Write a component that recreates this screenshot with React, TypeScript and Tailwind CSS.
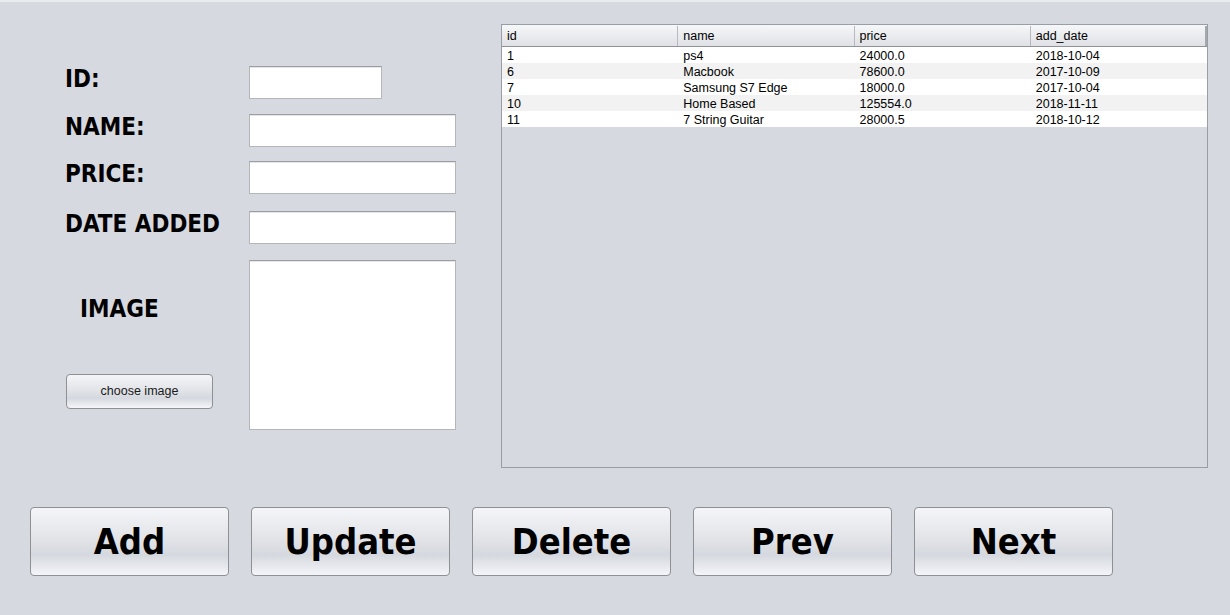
import React from "react";

const rows = [
  { id: "1", name: "ps4", price: "24000.0", date: "2018-10-04" },
  { id: "6", name: "Macbook", price: "78600.0", date: "2017-10-09" },
  { id: "7", name: "Samsung S7 Edge", price: "18000.0", date: "2017-10-04" },
  { id: "10", name: "Home Based", price: "125554.0", date: "2018-11-11" },
  { id: "11", name: "7 String Guitar", price: "28000.5", date: "2018-10-12" },
];

const cols = ["id", "name", "price", "add_date"];

const label =
  "font-['DejaVu_Sans_Condensed','DejaVu_Sans',sans-serif] font-bold text-[24px] leading-[24px] text-black";

const field =
  "bg-white border border-[#b3b6bb] border-t-[#9a9da2] shadow-[inset_0_1px_0_#e4e6e9]";

const FormRow = ({ text, width, className }: { text: string; width: string; className: string }) => (
  <div className={`flex items-center ${className}`}>
    <div className={`w-[184px] mb-[8px] ${label}`}>{text}</div>
    <div className={`${width} h-[33px] ${field}`} />
  </div>
);

const BigButton = ({ text }: { text: string }) => (
  <button className="w-[199px] h-[69px] rounded-[4px] border border-[#8e9094] bg-[linear-gradient(#f4f5f8_0%,#e2e4e8_45%,#d5d8de_70%,#f3f5f9_100%)] flex items-center justify-center font-['DejaVu_Sans_Condensed','DejaVu_Sans',sans-serif] font-bold text-[36px] text-black">
    {text}
  </button>
);

export default function App() {
  return (
    <div className="w-[1230px] h-[615px] bg-[#d6d9df] border-t-2 border-[#e9ebee] overflow-hidden">
      <div className="flex pt-[22px]">
        <div className="w-[501px] pl-[65px] pt-[42px]">
          <FormRow text="ID:" width="w-[133px]" className="" />
          <FormRow text="NAME:" width="w-[207px]" className="mt-[15px]" />
          <FormRow text="PRICE:" width="w-[207px]" className="mt-[14px]" />
          <FormRow text="DATE ADDED" width="w-[207px]" className="mt-[17px]" />
          <div className="flex mt-[16px]">
            <div className="w-[184px]">
              <div className={`pl-[15px] mt-[37px] ${label}`}>IMAGE</div>
              <button className="ml-[1px] mt-[53px] w-[147px] h-[35px] rounded-[4px] border border-[#8e9094] bg-[linear-gradient(#f4f5f8_0%,#e2e4e8_45%,#d5d8de_70%,#f3f5f9_100%)] font-['Liberation_Sans',Arial,sans-serif] text-[12.5px] text-[#1a1a1a]">
                choose image
              </button>
            </div>
            <div className={`w-[207px] h-[170px] ${field}`} />
          </div>
        </div>
        <div className="w-[707px] h-[444px] border border-[#9a9da3] font-['Liberation_Sans',Arial,sans-serif] text-[12.5px] text-black">
          <div className="flex h-[22px] pt-[1px] bg-[linear-gradient(#f6f7f9,#dfe1e5)] border-b border-[#8f9298]">
            {cols.map((c, i) => (
              <div
                key={c}
                className={`w-[176.5px] flex items-center pl-[5px] ${i < 3 ? "border-r border-[#b6b9be]" : "border-r-2 border-[#a4a7ac]"}`}
              >
                {c}
              </div>
            ))}
          </div>
          {rows.map((r, i) => (
            <div key={r.id} className={`flex h-[16px] pt-[2px] items-center ${i % 2 ? "bg-[#f2f2f2]" : "bg-white"}`}>
              <div className="w-[176.5px] pl-[5px]">{r.id}</div>
              <div className="w-[176.5px] pl-[5px]">{r.name}</div>
              <div className="w-[176.5px] pl-[5px]">{r.price}</div>
              <div className="w-[176.5px] pl-[5px]">{r.date}</div>
            </div>
          ))}
        </div>
      </div>
      <div className="flex gap-[22px] pl-[30px] mt-[39px]">
        {["Add", "Update", "Delete", "Prev", "Next"].map((t) => (
          <BigButton key={t} text={t} />
        ))}
      </div>
    </div>
  );
}
